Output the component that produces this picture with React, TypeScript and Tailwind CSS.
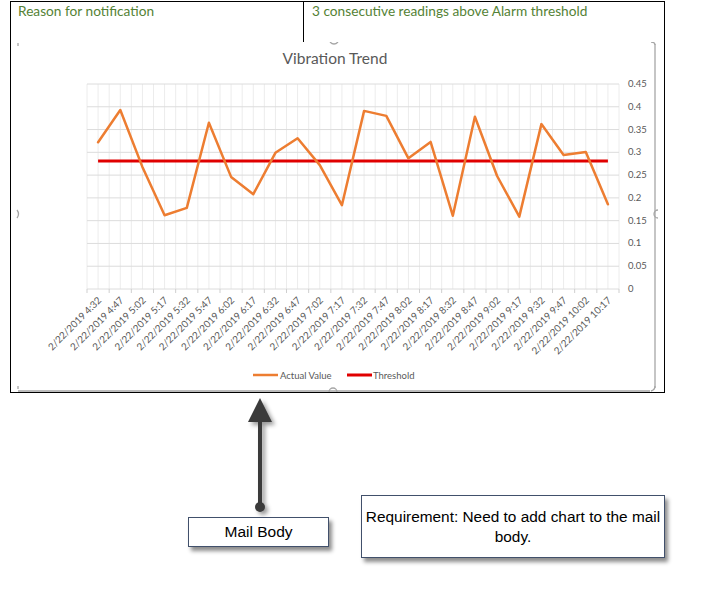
import React from "react";

// horas de las lecturas (cada 15 min)
const TIMES = [
  "4:32", "4:47", "5:02", "5:17", "5:32", "5:47", "6:02", "6:17",
  "6:32", "6:47", "7:02", "7:17", "7:32", "7:47", "8:02", "8:17",
  "8:32", "8:47", "9:02", "9:17", "9:32", "9:47", "10:02", "10:17",
];

const VALUES = [
  0.322, 0.393, 0.268, 0.162, 0.178, 0.365, 0.246, 0.208,
  0.299, 0.331, 0.272, 0.184, 0.391, 0.38, 0.287, 0.323,
  0.161, 0.378, 0.248, 0.159, 0.362, 0.294, 0.301, 0.186,
];

const THRESHOLD = 0.281;

// plot area in page coordinates
const PX0 = 87;
const PX1 = 619;
const PY0 = 84;
const PY1 = 289;
const STEP = (PX1 - PX0) / TIMES.length;

const yOf = (v: number) => PY1 - (v / 0.45) * (PY1 - PY0);
const xOf = (i: number) => PX0 + STEP * (i + 0.5);

const TICKS = ["0", "0.05", "0.1", "0.15", "0.2", "0.25", "0.3", "0.35", "0.4", "0.45"];

const VibrationChart: React.FC = () => {
  const points = VALUES.map((v, i) => `${xOf(i).toFixed(1)},${yOf(v).toFixed(1)}`).join(" ");
  const thY = yOf(THRESHOLD);

  return (
    <svg width={653} height={350} className="block" style={{ fontFamily: "Lato, 'Open Sans', sans-serif" }}>
      <g transform="translate(-11,-42)">
        <text x={335} y={64} textAnchor="middle" fontSize={15.5} fill="#595959">
          Vibration Trend
        </text>

        {/* grid */}
        {Array.from({ length: TIMES.length * 2 + 1 }).map((_, i) => {
          const x = PX0 + (STEP / 2) * i;
          return <line key={"v" + i} x1={x} x2={x} y1={PY0} y2={PY1} stroke="#ececec" strokeWidth={1} />;
        })}
        {TICKS.map((t, i) => {
          const y = PY1 - ((PY1 - PY0) / 9) * i;
          return (
            <g key={t}>
              <line x1={PX0} x2={PX1} y1={y} y2={y} stroke="#dcdcdc" strokeWidth={1} />
              <text x={628} y={y + 3} fontSize={9.5} fill="#595959">
                {t}
              </text>
            </g>
          );
        })}
        {Array.from({ length: TIMES.length + 1 }).map((_, i) => {
          const x = PX0 + STEP * i;
          return <line key={"t" + i} x1={x} x2={x} y1={PY1} y2={PY1 + 4} stroke="#cfcfcf" strokeWidth={1} />;
        })}

        {/* series */}
        <line x1={xOf(0)} x2={xOf(TIMES.length - 1)} y1={thY} y2={thY} stroke="#e00000" strokeWidth={3} />
        <polyline points={points} fill="none" stroke="#ed7d31" strokeWidth={2.5} strokeLinejoin="round" strokeLinecap="round" />

        {/* category labels */}
        {TIMES.map((t, i) => {
          const x = xOf(i) + 4;
          const y = 301;
          return (
            <text key={t} x={x} y={y} fontSize={9.8} fill="#595959" textAnchor="end" transform={`rotate(-45 ${x} ${y})`}>
              {`2/22/2019 ${t}`}
            </text>
          );
        })}

        {/* legend */}
        <line x1={253} x2={278} y1={375} y2={375} stroke="#ed7d31" strokeWidth={2.5} />
        <text x={280} y={378.5} fontSize={9.5} fill="#595959">
          Actual Value
        </text>
        <line x1={347} x2={372} y1={375} y2={375} stroke="#e00000" strokeWidth={3} />
        <text x={373} y={378.5} fontSize={9.5} fill="#595959">
          Threshold
        </text>

        {/* selection handles of the pasted picture */}
        <g stroke="#a6a6a6" strokeWidth={1.3} fill="none">
          <line x1={18} x2={18} y1={43} y2={46} />
          <path d="M17 210 q3 4 0 8" />
          <line x1={18} x2={18} y1={386} y2={389} />
          <path d="M330 42 q4 4 8 0" />
          <path d="M329 392 a4 4 0 0 1 8 0" />
          <line x1={655} x2={655} y1={44} y2={388} />
          <path d="M651 42 q4 0 4 3" />
          <path d="M658 210 a4 4 0 1 0 0 8" />
          <path d="M655 386 q0 4 -4 5" />
          <line x1={18} x2={650} y1={391} y2={391} />
        </g>
      </g>
    </svg>
  );
};

const Arrow: React.FC = () => (
  <svg width={40} height={124} className="block">
    <defs>
      <filter id="sh" x="-50%" y="-20%" width="200%" height="150%">
        <feDropShadow dx={3} dy={3} stdDeviation={2} floodColor="#000" floodOpacity={0.4} />
      </filter>
    </defs>
    <g filter="url(#sh)" fill="#3a3a3a">
      <polygon points="21,5 33,29 9,29" />
      <rect x={19} y={28} width={4} height={86} />
      <circle cx={21} cy={114} r={5} />
    </g>
  </svg>
);

const App: React.FC = () => {
  return (
    <div className="min-h-screen w-[711px] bg-white" style={{ fontFamily: "'Liberation Sans', Arial, sans-serif" }}>
      <div className="ml-[10px] mt-[1px] h-[392px] w-[655px] border border-black">
        <div
          className="grid h-[40px] grid-cols-[293px_1fr] text-[13.7px] leading-[18px] text-[#548235]"
          style={{ fontFamily: "Lato, 'Open Sans', sans-serif" }}
        >
          <div className="border-r border-black pl-[7px]">Reason for notification</div>
          <div className="pl-[8px]">3 consecutive readings above Alarm threshold</div>
        </div>
        <VibrationChart />
      </div>

      <div className="flex items-start">
        <div className="ml-[188px] flex w-[141px] flex-col items-center">
          <Arrow />
          <div className="flex h-[30px] w-[141px] items-center justify-center border border-[#41506b] bg-white text-[15.5px] text-black shadow-[3px_4px_4px_rgba(0,0,0,0.45)]">
            Mail Body
          </div>
        </div>
        <div className="ml-[32px] mt-[102px] flex h-[63px] w-[304px] items-center justify-center border border-[#41506b] bg-white px-[1px] text-center text-[15.4px] leading-[20px] text-black shadow-[3px_4px_4px_rgba(0,0,0,0.45)]">
          Requirement: Need to add chart to the mail body.
        </div>
      </div>
    </div>
  );
};

export default App;
